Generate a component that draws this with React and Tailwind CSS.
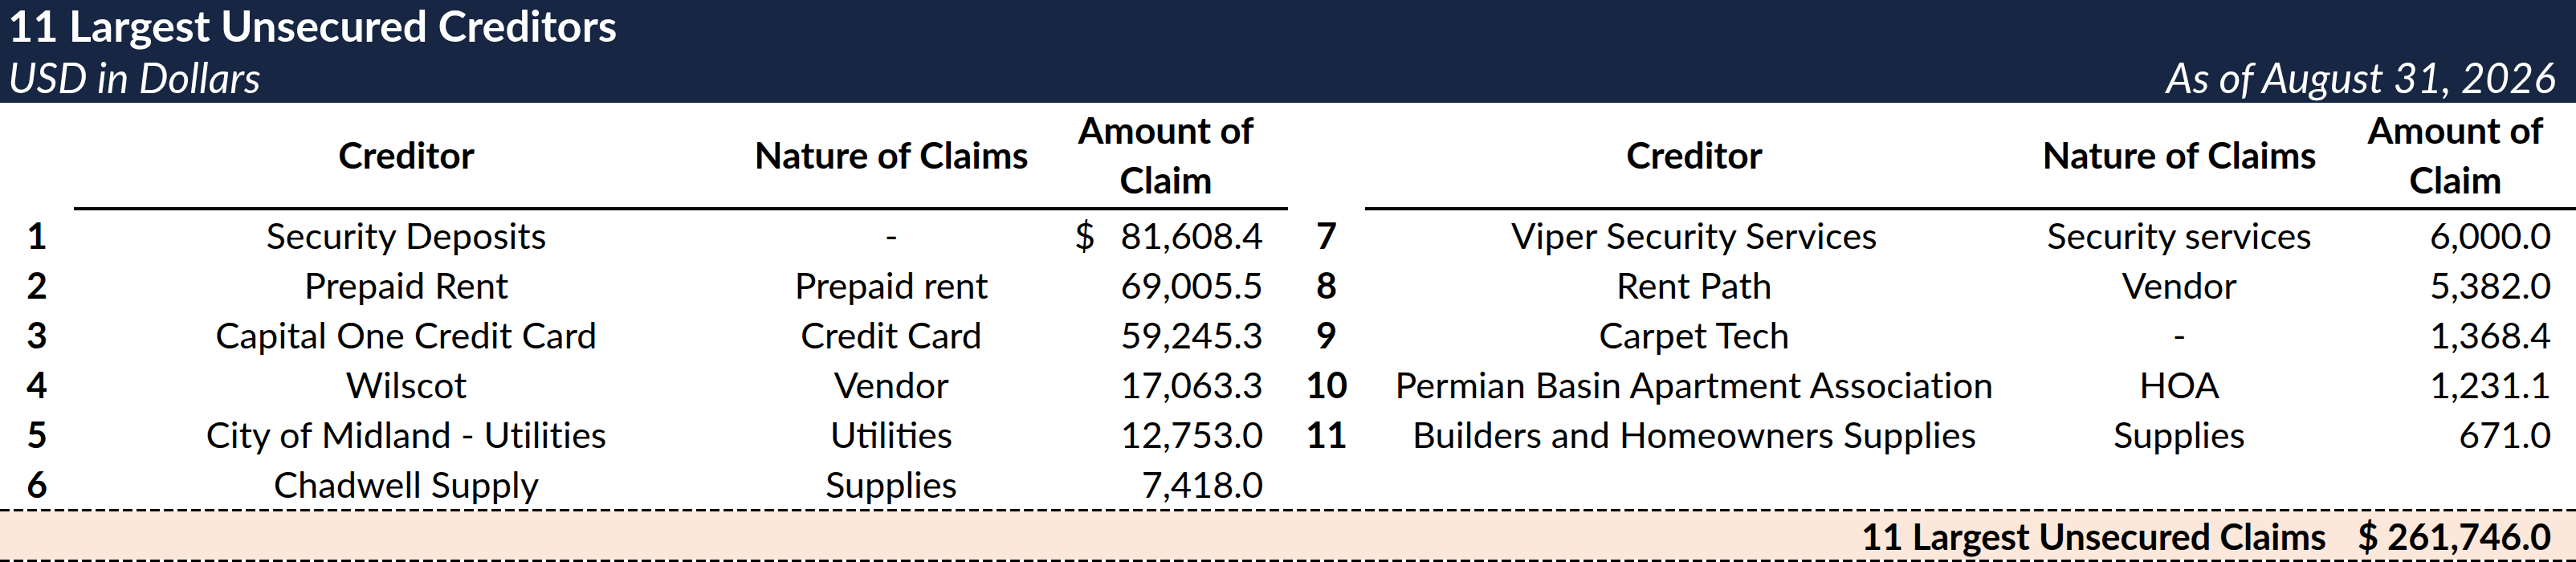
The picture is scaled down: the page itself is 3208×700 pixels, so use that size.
const leftRows = [
  { n: 1, name: "Security Deposits", nature: "-", amount: "81,608.4", dollar: true },
  { n: 2, name: "Prepaid Rent", nature: "Prepaid rent", amount: "69,005.5" },
  { n: 3, name: "Capital One Credit Card", nature: "Credit Card", amount: "59,245.3" },
  { n: 4, name: "Wilscot", nature: "Vendor", amount: "17,063.3" },
  { n: 5, name: "City of Midland - Utilities", nature: "Utilities", amount: "12,753.0" },
  { n: 6, name: "Chadwell Supply", nature: "Supplies", amount: "7,418.0" },
];

const rightRows = [
  { n: 7, name: "Viper Security Services", nature: "Security services", amount: "6,000.0" },
  { n: 8, name: "Rent Path", nature: "Vendor", amount: "5,382.0" },
  { n: 9, name: "Carpet Tech", nature: "-", amount: "1,368.4" },
  { n: 10, name: "Permian Basin Apartment Association", nature: "HOA", amount: "1,231.1" },
  { n: 11, name: "Builders and Homeowners Supplies", nature: "Supplies", amount: "671.0" },
  null,
];

const cols = "grid grid-cols-[92px_828px_380px_304px_96px_820px_388px_300px]";

function Dashes() {
  return <div className="h-[3px] w-full bg-[repeating-linear-gradient(90deg,#000_0_12px,transparent_12px_17px)]" />;
}

function HeaderCells() {
  return (
    <>
      <div className="h-[134px] border-b-4 border-black flex items-center justify-center font-bold text-[46px]">Creditor</div>
      <div className="h-[134px] border-b-4 border-black flex items-center justify-center font-bold text-[46px]">Nature of Claims</div>
      <div className="h-[134px] border-b-4 border-black flex flex-col items-center justify-center font-bold text-[46px]">
        <span>Amount of</span>
        <span>Claim</span>
      </div>
    </>
  );
}

function Half({ row }) {
  if (!row) {
    return (
      <>
        <div />
        <div />
        <div />
        <div />
      </>
    );
  }
  return (
    <>
      <div className="flex items-center justify-center font-bold">{row.n}</div>
      <div className="flex items-center justify-center whitespace-nowrap tracking-[0.2px]">{row.name}</div>
      <div className="flex items-center justify-center whitespace-nowrap">{row.nature}</div>
      <div className="flex items-center justify-between pl-[38px] pr-[31px]">
        <span>{row.dollar ? "$" : ""}</span>
        <span>{row.amount}</span>
      </div>
    </>
  );
}

export default function App() {
  return (
    <div className="w-[3208px] h-[700px] bg-white text-black font-[Lato,sans-serif] text-[45px] leading-[62px] overflow-hidden">
      <div className="h-[128px] bg-[#172642] text-white px-[10px]">
        <div className="h-[64px] flex items-center text-[54px] font-bold">11 Largest Unsecured Creditors</div>
        <div className="h-[64px] flex items-center justify-between italic text-[52px]">
          <span>USD in Dollars</span>
          <span className="pr-[15px]">As of August 31, 2026</span>
        </div>
      </div>

      <div className={cols}>
        <div />
        <HeaderCells />
        <div />
        <HeaderCells />
      </div>

      {leftRows.map((row, i) => (
        <div key={i} className={`${cols} h-[62px]`}>
          <Half row={row} />
          <Half row={rightRows[i]} />
        </div>
      ))}

      <Dashes />
      <div className={`${cols} h-[60px] bg-[#fce8da] font-bold`}>
        <div className="col-span-6" />
        <div className="flex items-center justify-end pr-[11px] whitespace-nowrap">11 Largest Unsecured Claims</div>
        <div className="flex items-center justify-between pl-[28px] pr-[31px]">
          <span>$</span>
          <span>261,746.0</span>
        </div>
      </div>
      <Dashes />
    </div>
  );
}
